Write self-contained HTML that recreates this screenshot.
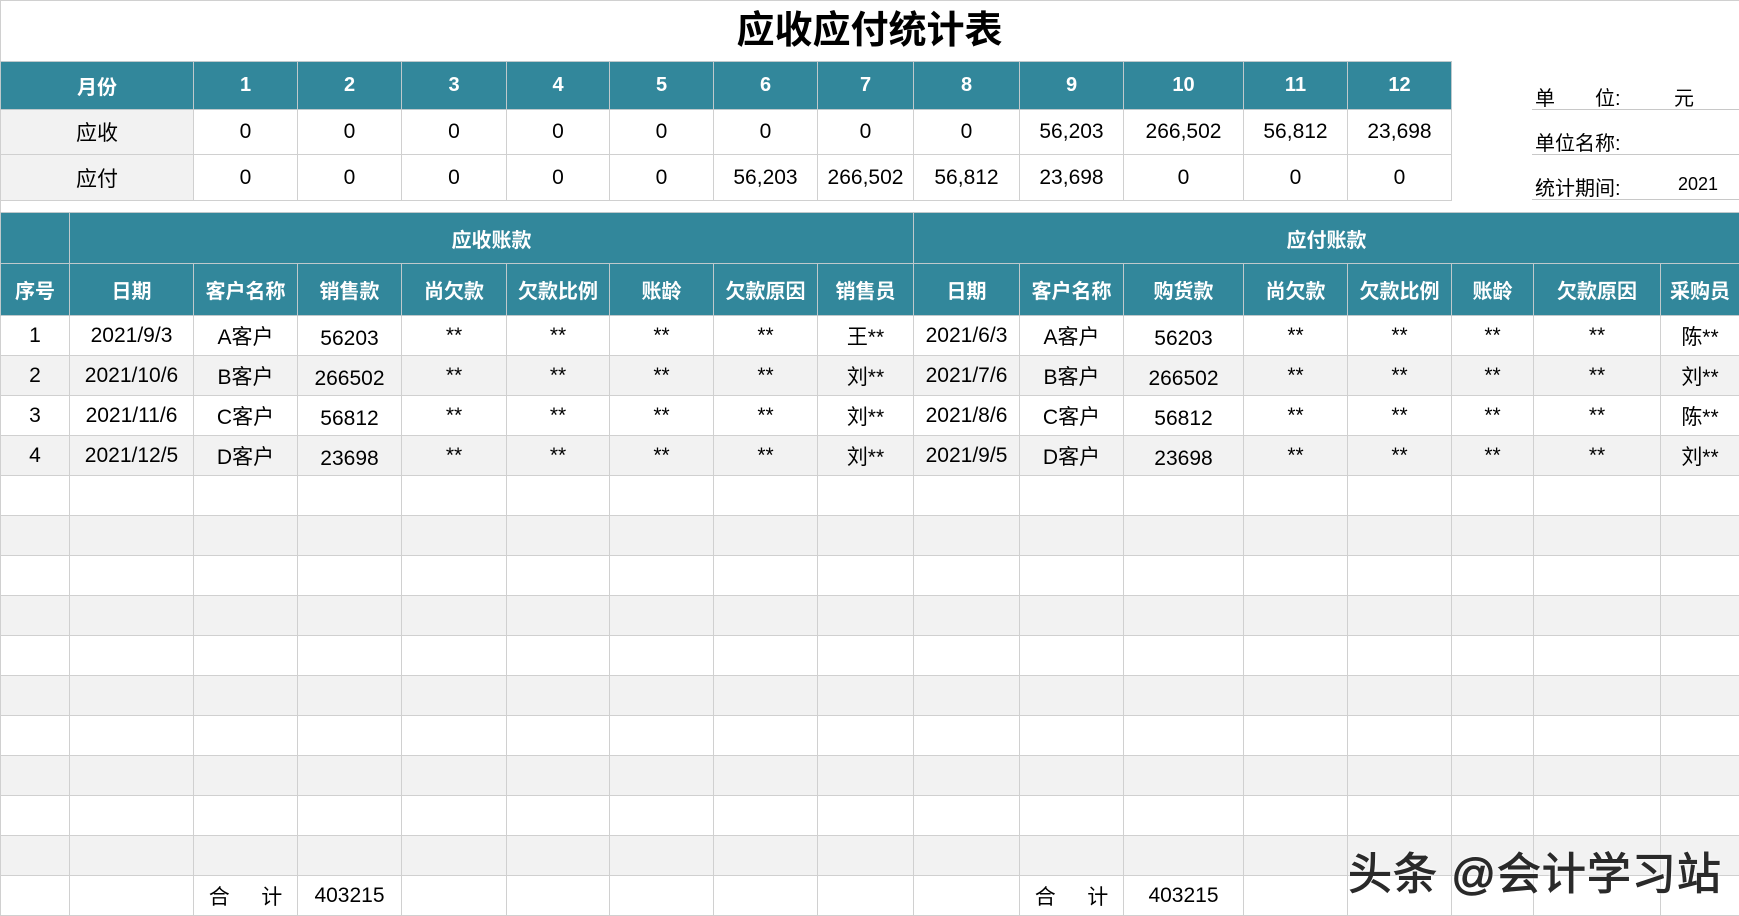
<!DOCTYPE html>
<html><head><meta charset="utf-8"><style>
*{margin:0;padding:0;box-sizing:border-box}
body{width:1739px;height:916px;background:#fff;position:relative;overflow:hidden;font-family:"Liberation Sans","Noto Sans CJK SC",sans-serif;color:#000}
#frame{position:absolute;left:0;top:0;width:1739px;height:916px;border-top:1px solid #d0d0d0;border-left:1px solid #d0d0d0}
.title{position:absolute;left:0;width:1739px;top:8px;text-align:center;font-size:38px;font-weight:bold;line-height:46px}
table{position:absolute;border-collapse:collapse;table-layout:fixed}
td{border:1px solid #d0d0d0;text-align:center;font-size:21px;padding:0;overflow:hidden;white-space:nowrap}
.h td,td.h{background:#32879b;color:#fff;font-weight:bold;border-color:#bfc9cc;font-size:20px}
.g td{background:#f2f2f2}
td.gc{background:#f2f2f2}
.lbl{position:absolute;font-size:20px}
.ln{position:absolute;left:1532px;width:207px;height:1px;background:#c8c8c8}
.d td{vertical-align:bottom;padding-bottom:4px}
.d td.m{vertical-align:middle;padding-bottom:0}
.wm{position:absolute;left:1348px;top:838px;font-size:44px;color:#2a2a2a;white-space:nowrap;letter-spacing:1px;-webkit-text-stroke:1px #2a2a2a;text-shadow:0 0 3px #fff,0 0 3px #fff}
</style></head><body>
<div id="frame"></div>
<div class="title">应收应付统计表</div>
<table style="left:0;top:61px;width:1452px">
<colgroup><col style="width:193px"><col style="width:104px"><col style="width:104px"><col style="width:105px"><col style="width:103px"><col style="width:104px"><col style="width:104px"><col style="width:96px"><col style="width:106px"><col style="width:104px"><col style="width:120px"><col style="width:104px"><col style="width:104px"></colgroup>
<tr class="h" style="height:48px"><td>月份</td><td>1</td><td>2</td><td>3</td><td>4</td><td>5</td><td>6</td><td>7</td><td>8</td><td>9</td><td>10</td><td>11</td><td>12</td></tr>
<tr style="height:45px"><td class="gc">应收</td><td>0</td><td>0</td><td>0</td><td>0</td><td>0</td><td>0</td><td>0</td><td>0</td><td>56,203</td><td>266,502</td><td>56,812</td><td>23,698</td></tr>
<tr style="height:46px"><td class="gc">应付</td><td>0</td><td>0</td><td>0</td><td>0</td><td>0</td><td>56,203</td><td>266,502</td><td>56,812</td><td>23,698</td><td>0</td><td>0</td><td>0</td></tr>
</table>
<div class="lbl" style="left:1535px;top:82px">单&emsp;&emsp;位:</div>
<div class="lbl" style="left:1674px;top:82px">元</div>
<div class="ln" style="top:109px"></div>
<div class="lbl" style="left:1535px;top:127px">单位名称:</div>
<div class="ln" style="top:154px"></div>
<div class="lbl" style="left:1535px;top:172px">统计期间:</div>
<div class="lbl" style="left:1678px;top:174px;font-size:18px">2021</div>
<div class="ln" style="top:199px"></div>

<table style="left:0;top:212px;width:1739px">
<colgroup><col style="width:69px"><col style="width:124px"><col style="width:104px"><col style="width:104px"><col style="width:105px"><col style="width:103px"><col style="width:104px"><col style="width:104px"><col style="width:96px"><col style="width:106px"><col style="width:104px"><col style="width:120px"><col style="width:104px"><col style="width:104px"><col style="width:82px"><col style="width:127px"><col style="width:79px"></colgroup>
<tr class="h" style="height:51px"><td></td><td colspan="8">应收账款</td><td colspan="8">应付账款</td></tr>
<tr class="h" style="height:52px"><td>序号</td><td>日期</td><td>客户名称</td><td>销售款</td><td>尚欠款</td><td>欠款比例</td><td>账龄</td><td>欠款原因</td><td>销售员</td><td>日期</td><td>客户名称</td><td>购货款</td><td>尚欠款</td><td>欠款比例</td><td>账龄</td><td>欠款原因</td><td>采购员</td></tr>
<tr class="d" style="height:40px"><td class="m">1</td><td class="m">2021/9/3</td><td>A客户</td><td>56203</td><td class="m">**</td><td class="m">**</td><td class="m">**</td><td class="m">**</td><td>王**</td><td class="m">2021/6/3</td><td>A客户</td><td>56203</td><td class="m">**</td><td class="m">**</td><td class="m">**</td><td class="m">**</td><td>陈**</td></tr>
<tr class="d g" style="height:40px"><td class="m">2</td><td class="m">2021/10/6</td><td class="m">B客户</td><td>266502</td><td class="m">**</td><td class="m">**</td><td class="m">**</td><td class="m">**</td><td>刘**</td><td class="m">2021/7/6</td><td>B客户</td><td>266502</td><td class="m">**</td><td class="m">**</td><td class="m">**</td><td class="m">**</td><td>刘**</td></tr>
<tr class="d" style="height:40px"><td class="m">3</td><td class="m">2021/11/6</td><td class="m">C客户</td><td>56812</td><td class="m">**</td><td class="m">**</td><td class="m">**</td><td class="m">**</td><td>刘**</td><td class="m">2021/8/6</td><td>C客户</td><td>56812</td><td class="m">**</td><td class="m">**</td><td class="m">**</td><td class="m">**</td><td>陈**</td></tr>
<tr class="d g" style="height:40px"><td class="m">4</td><td class="m">2021/12/5</td><td class="m">D客户</td><td>23698</td><td class="m">**</td><td class="m">**</td><td class="m">**</td><td class="m">**</td><td>刘**</td><td class="m">2021/9/5</td><td>D客户</td><td>23698</td><td class="m">**</td><td class="m">**</td><td class="m">**</td><td class="m">**</td><td>刘**</td></tr>
<tr style="height:40px"><td></td><td></td><td></td><td></td><td></td><td></td><td></td><td></td><td></td><td></td><td></td><td></td><td></td><td></td><td></td><td></td><td></td></tr>
<tr class="g" style="height:40px"><td></td><td></td><td></td><td></td><td></td><td></td><td></td><td></td><td></td><td></td><td></td><td></td><td></td><td></td><td></td><td></td><td></td></tr>
<tr style="height:40px"><td></td><td></td><td></td><td></td><td></td><td></td><td></td><td></td><td></td><td></td><td></td><td></td><td></td><td></td><td></td><td></td><td></td></tr>
<tr class="g" style="height:40px"><td></td><td></td><td></td><td></td><td></td><td></td><td></td><td></td><td></td><td></td><td></td><td></td><td></td><td></td><td></td><td></td><td></td></tr>
<tr style="height:40px"><td></td><td></td><td></td><td></td><td></td><td></td><td></td><td></td><td></td><td></td><td></td><td></td><td></td><td></td><td></td><td></td><td></td></tr>
<tr class="g" style="height:40px"><td></td><td></td><td></td><td></td><td></td><td></td><td></td><td></td><td></td><td></td><td></td><td></td><td></td><td></td><td></td><td></td><td></td></tr>
<tr style="height:40px"><td></td><td></td><td></td><td></td><td></td><td></td><td></td><td></td><td></td><td></td><td></td><td></td><td></td><td></td><td></td><td></td><td></td></tr>
<tr class="g" style="height:40px"><td></td><td></td><td></td><td></td><td></td><td></td><td></td><td></td><td></td><td></td><td></td><td></td><td></td><td></td><td></td><td></td><td></td></tr>
<tr style="height:40px"><td></td><td></td><td></td><td></td><td></td><td></td><td></td><td></td><td></td><td></td><td></td><td></td><td></td><td></td><td></td><td></td><td></td></tr>
<tr class="g" style="height:40px"><td></td><td></td><td></td><td></td><td></td><td></td><td></td><td></td><td></td><td></td><td></td><td></td><td></td><td></td><td></td><td></td><td></td></tr>
<tr style="height:40px"><td></td><td></td><td>合&emsp;&ensp;计</td><td>403215</td><td></td><td></td><td></td><td></td><td></td><td></td><td>合&emsp;&ensp;计</td><td>403215</td><td></td><td></td><td></td><td></td><td></td></tr>
</table>
<div class="wm">头条 @会计学习站</div>
</body></html>
